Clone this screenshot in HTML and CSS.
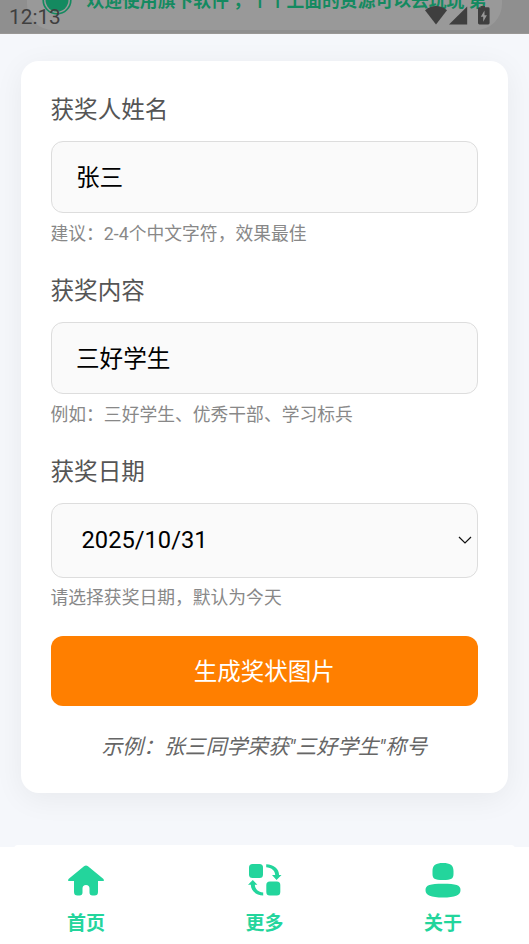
FILE: index.html
```html
<!DOCTYPE html>
<html lang="zh-CN">
<head>
<meta charset="utf-8">
<title>奖状生成</title>
<link rel="stylesheet" href="styles.css">
</head>
<body>
<header class="top">
  <div class="notice">
    <svg class="notice-icon" viewBox="0 0 30 30"><circle cx="15" cy="15" r="13.8" fill="none" stroke="#148a60" stroke-width="1.7"/><circle cx="15" cy="15" r="11.5" fill="#148a60"/></svg>
    <span class="notice-text">欢迎使用旗下软件 ，个个上面的资源可以去玩玩 第</span>
  </div>
  <div class="status">
    <span class="clock">12:13</span>
    <svg class="signals" viewBox="0 0 66 20" fill="#3f3f3f">
      <path d="M0 4.2Q11 -4.2 22 4.2L11 18.5Z"/>
      <path d="M24 18.5L42.2 0.5V18.5Z"/>
      <path fill-rule="evenodd" d="M56 0h4v1.2h3.2q1.4 0 1.4 1.4v14.5q0 1.4-1.4 1.4h-8.8q-1.4 0-1.4-1.4V2.600q0-1.400 1.400-1.400H56ZM59.500 4.500L55.800 10.700H58.200V15.700L61.900 9.300H59.500Z"/>
    </svg>
  </div>
</header>
<main class="card">
  <section class="field">
    <div class="label">获奖人姓名</div>
    <div class="input">张三</div>
    <div class="hint">建议：2-4个中文字符，效果最佳</div>
  </section>
  <section class="field">
    <div class="label">获奖内容</div>
    <div class="input">三好学生</div>
    <div class="hint">例如：三好学生、优秀干部、学习标兵</div>
  </section>
  <section class="field">
    <div class="label">获奖日期</div>
    <div class="input date"><span>2025/10/31</span><svg class="chevron" viewBox="0 0 14 8"><path d="M1 1L7 7L13 1" fill="none" stroke="#111" stroke-width="1.2"/></svg></div>
    <div class="hint">请选择获奖日期，默认为今天</div>
  </section>
  <button class="submit">生成奖状图片</button>
  <p class="example">示例：张三同学荣获"三好学生"称号</p>
</main>
<nav class="tabs">
  <a class="tab">
    <svg class="icon" viewBox="0 0 38 38"><path d="M17 4.200Q19 2.600 21 4.200L36.200 16.700Q38 19 35.500 19H31V30Q31 33.500 27.500 33.500H25.500Q22.500 33.500 22.500 30.500V26.500Q22.500 23 19 23T15.500 26.500V30.500Q15.500 33.500 12.500 33.500H10.500Q7 33.500 7 30V19H2.500Q0 19 1.800 16.700Z"/></svg>
    <span>首页</span>
  </a>
  <a class="tab">
    <svg class="icon" viewBox="0 0 38 38"><rect x="3" y="2" width="14" height="14" rx="3.500"/><rect x="20.300" y="19.600" width="14" height="14" rx="3.500"/><path d="M20.200 2.200C28 2.500 33 7 33.100 12.900H35.500L30.500 17.900L26 12.900H29.200C29 8.500 25 5.500 20.200 5.300ZM17.200 33.500C9.500 33.200 5 28.500 4.800 22.700H2L6.800 18L11.400 22.700H8.800C9 27.200 12.500 30.200 17.200 30.400Z"/></svg>
    <span>更多</span>
  </a>
  <a class="tab">
    <svg class="icon" viewBox="0 0 38 38"><path d="M8.500 9C8.500 3 12 1 19 1S29.500 3 29.500 9V12C29.500 16.500 27.500 18 19 18S8.500 16.500 8.500 12ZM1.500 28C1.500 23 6 21.700 19 21.700S36.500 23 36.500 28C36.500 33.500 31 35.500 19 35.500S1.500 33.500 1.500 28Z"/></svg>
    <span>关于</span>
  </a>
</nav>
</body>
</html>
```
FILE: styles.css
```css
* { box-sizing: border-box; }
body {
  margin: 0;
  height: 944px;
  display: flex;
  flex-direction: column;
  overflow: hidden;
  background: #f5f7fb;
  font-family: Roboto, "Noto Sans CJK SC", sans-serif;
}
.top {
  position: relative;
  flex: none;
  height: 34px;
  overflow: hidden;
  padding: 0 27px;
  background: #8f8f8f;
  border-bottom: 1px solid #999795;
}
.notice {
  display: flex;
  height: 30px;
  border-radius: 0 0 26px 26px;
  background: #999;
}
.notice-icon {
  flex: none;
  width: 30px;
  height: 30px;
  margin: -15px 0 0 14.500px;
}
.notice-text {
  margin: -12px 0 0 15px;
  color: #148a60;
  font-size: 17.800px;
  font-weight: 700;
  line-height: 26px;
  white-space: nowrap;
}
.status {
  position: absolute;
  inset: 0;
  display: flex;
  justify-content: space-between;
  padding: 6px 38px 0 9px;
  color: #3f3f3f;
}
.clock {
  font-size: 20.800px;
  line-height: 22px;
}
.signals {
  width: 66px;
  height: 20px;
}
.card {
  flex: none;
  height: 732.500px;
  margin: 26.500px 21px 0 20.500px;
  padding: 30px 30px 0 30px;
  border-radius: 18px;
  background: #fff;
  box-shadow: 0 6px 30px rgba(0, 0, 0, .06);
}
.field { height: 181px; }
.label {
  height: 50px;
  padding-top: 2px;
  color: #555;
  font-size: 23.600px;
  line-height: 35px;
}
.input {
  height: 72.500px;
  display: flex;
  align-items: center;
  padding: 0 24.500px 2px;
  border: 1.500px solid #ddd;
  border-radius: 12px;
  background: #fafafa;
  color: #000;
  font-size: 23.600px;
}
.date {
  height: 75px;
  justify-content: space-between;
  padding: 0 5px 0 30px;
  font-size: 23.700px;
}
.chevron {
  width: 14px;
  height: 8px;
}
.hint {
  margin-top: 7.500px;
  color: #888;
  font-size: 17.800px;
  line-height: 26px;
}
.submit {
  display: block;
  width: 100%;
  height: 70px;
  margin: 2.500px 0 0;
  padding: 0 0 2px;
  border: 0;
  border-radius: 12px;
  background: #ff7f00;
  color: #fff;
  font: inherit;
  font-size: 23.500px;
}
.example {
  margin: 25.500px 0 0;
  color: #666;
  font-size: 20.850px;
  font-style: italic;
  line-height: 31px;
  text-align: center;
}
.tabs {
  position: relative;
  flex: none;
  height: 97px;
  margin-top: auto;
  display: flex;
  justify-content: space-between;
  padding: 15px 67px 0;
  background: #fff;
}
.tabs::before {
  content: "";
  position: absolute;
  top: -2px;
  left: 14px;
  right: 14px;
  height: 4px;
  border-radius: 10px 10px 0 0;
  background: #fff;
}
.tab {
  width: 38px;
  display: flex;
  flex-direction: column;
  align-items: center;
  color: #23d59c;
  font-size: 19px;
  font-weight: 700;
  line-height: 28px;
}
.tab span { margin-top: 10px; }
.icon {
  width: 38px;
  height: 38px;
  fill: #23d59c;
}
```
